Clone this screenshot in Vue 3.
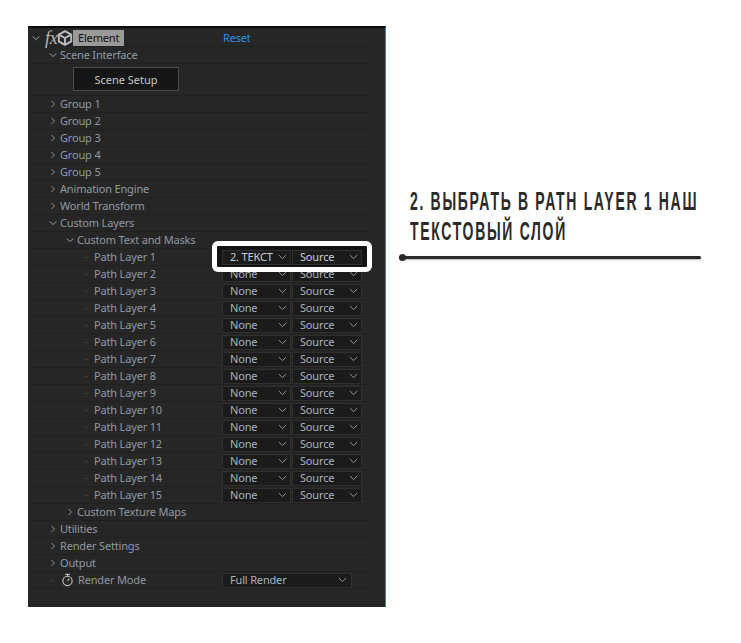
<script setup>
const groups = ['Group 1', 'Group 2', 'Group 3', 'Group 4', 'Group 5', 'Animation Engine', 'World Transform']
const paths = Array.from({ length: 15 }, (_, i) => ({
  name: `Path Layer ${i + 1}`,
  value: i === 0 ? '2. ТЕКСТ' : 'None',
}))
const tail = ['Utilities', 'Render Settings', 'Output']
</script>

<template>
  <div class="page">
    <section class="panel">
      <div class="row fx-row">
        <svg class="chev open lvl0" viewBox="0 0 8 8"><path d="M.5 2.5 4 5.5 7.5 2.5" /></svg>
        <span class="fx">fx</span>
        <svg class="cube" viewBox="0 0 16 16">
          <path d="M8 1.2 14.2 4.6V11.4L8 14.8 1.8 11.4V4.6Z" />
          <path d="M1.8 4.6 8 8 14.2 4.6M8 8V14.8" />
        </svg>
        <span class="tag">Element</span>
        <a class="reset">Reset</a>
      </div>
      <div class="row l1">
        <svg class="chev open" viewBox="0 0 8 8"><path d="M.5 2.5 4 5.5 7.5 2.5" /></svg>
        <span>Scene Interface</span>
      </div>
      <div class="row button-row"><button class="setup">Scene Setup</button></div>
      <div v-for="g in groups" :key="g" class="row l1">
        <svg class="chev" viewBox="0 0 8 8"><path d="M2.5 1 5.5 4 2.5 7" /></svg>
        <span>{{ g }}</span>
      </div>
      <div class="row l1">
        <svg class="chev open" viewBox="0 0 8 8"><path d="M.5 2.5 4 5.5 7.5 2.5" /></svg>
        <span>Custom Layers</span>
      </div>
      <div class="row l2">
        <svg class="chev open" viewBox="0 0 8 8"><path d="M.5 2.5 4 5.5 7.5 2.5" /></svg>
        <span>Custom Text and Masks</span>
      </div>
      <div v-for="(p, i) in paths" :key="p.name" class="row l3" :class="{ lifted: i === 0 }">
        <i class="tick"></i>
        <span class="name">{{ p.name }}</span>
        <div class="controls">
          <div v-if="i === 0" class="highlight"></div>
          <div class="select first">
            <span>{{ p.value }}</span>
            <svg viewBox="0 0 9 6"><path d="M.8 1 4.5 4.6 8.2 1" /></svg>
          </div>
          <div class="select second">
            <span>Source</span>
            <svg viewBox="0 0 9 6"><path d="M.8 1 4.5 4.6 8.2 1" /></svg>
          </div>
        </div>
      </div>
      <div class="row l2">
        <svg class="chev" viewBox="0 0 8 8"><path d="M2.5 1 5.5 4 2.5 7" /></svg>
        <span>Custom Texture Maps</span>
      </div>
      <div v-for="t in tail" :key="t" class="row l1">
        <svg class="chev" viewBox="0 0 8 8"><path d="M2.5 1 5.5 4 2.5 7" /></svg>
        <span>{{ t }}</span>
      </div>
      <div class="row mode">
        <i class="tick"></i>
        <svg class="watch" viewBox="0 0 14 14">
          <circle cx="7" cy="8" r="5" />
          <path d="M4.6 1H9.4M7 1V3M7 8 9 5.5" />
        </svg>
        <span class="name">Render Mode</span>
        <div class="controls">
          <div class="select wide">
            <span>Full Render</span>
            <svg viewBox="0 0 9 6"><path d="M.8 1 4.5 4.6 8.2 1" /></svg>
          </div>
        </div>
      </div>
    </section>

    <aside class="note">
      <h2>
        <span>2. ВЫБРАТЬ В PATH LAYER 1 НАШ</span>
        <span>ТЕКСТОВЫЙ СЛОЙ</span>
      </h2>
      <div class="rule"></div>
    </aside>
  </div>
</template>

<style scoped>
.page {
  width: 741px;
  height: 643px;
  background: #fff;
  display: flex;
  align-items: flex-start;
  padding: 26px 0 0 28px;
  box-sizing: border-box;
  overflow: hidden;
}
.panel {
  width: 358px;
  height: 581px;
  box-sizing: border-box;
  padding: 4px 17px 0 0;
  flex: none;
  background: #262626;
  border-top: 2px solid #0c0c0c;
  border-right: 1px solid #3f7fc0;
  font: 11px/16px "Noto Sans", sans-serif;
  letter-spacing: -0.17px;
  color: #8f99a3;
}
.panel > .fx-row { margin-top: -2px; }
.row {
  height: 17px;
  box-sizing: border-box;
  border-bottom: 1px solid #202020;
  display: flex;
  align-items: center;
  position: relative;
  white-space: nowrap;
}
.chev {
  width: 8px;
  height: 8px;
  flex: none;
  margin-right: 4px;
}
.chev path, .select path {
  fill: none;
  stroke: #8f959b;
  stroke-width: 1;
}
.fx-row { padding-left: 4px; }
.fx-row .lvl0 { margin-right: 5px; }
.fx {
  font: italic 18px/16px "Liberation Serif", serif;
  color: #b4b8bc;
  width: 12px;
}
.cube {
  width: 16px;
  height: 16px;
  flex: none;
}
.cube path {
  fill: none;
  stroke: #b9bcc0;
  stroke-width: 1.9;
}
.tag {
  width: 51px;
  height: 16px;
  padding-left: 5px;
  box-sizing: border-box;
  background: #9a9a9a;
  color: #111;
  line-height: 16px;
}
.reset {
  margin-left: 99px;
  color: #2f8fe8;
}
.l1 { padding-left: 21px; }
.l1 .chev { margin-right: 3px; }
.l2 { padding-left: 38px; }
.l2 .chev { margin-right: 3px; }
.button-row {
  height: 32px;
  padding: 0 0 1px 45px;
}
.setup {
  width: 106px;
  height: 24px;
  padding: 0;
  background: #161616;
  border: 1px solid #4a4a4a;
  color: #c4c8cc;
  font: 11px "Noto Sans", sans-serif;
}
.l3 { padding-left: 66px; }
.tick {
  position: absolute;
  left: 57px;
  top: 8px;
  width: 3px;
  height: 1px;
  background: #3c3c3c;
}
.l3 .name { width: 128px; flex: none; }
.mode { padding-left: 33px; }
.mode .tick { left: 23px; }
.watch {
  width: 13px;
  height: 14px;
  flex: none;
  margin-right: 4px;
}
.watch circle, .watch path {
  fill: none;
  stroke: #c2c4c6;
  stroke-width: 1.2;
}
.mode .name { width: 144px; flex: none; }
.controls {
  display: flex;
  gap: 1px;
  position: relative;
}
.select {
  height: 15px;
  box-sizing: border-box;
  background: #1b1b1b;
  border: 1px solid #2f2f2f;
  color: #a7b3be;
  display: flex;
  align-items: center;
  justify-content: space-between;
  padding: 0 3px 1px 7px;
  line-height: 13px;
  position: relative;
}
.select svg { width: 9px; height: 6px; flex: none; }
.first { width: 69px; }
.second { width: 70px; }
.wide { width: 130px; padding-right: 4px; }
.lifted { z-index: 2; }
.lifted .select { background: #1b1b1b; color: #c8ced4; }
.highlight {
  position: absolute;
  left: -10px;
  top: -9px;
  width: 160px;
  height: 31px;
  box-sizing: border-box;
  border: 5px solid #fff;
  border-radius: 6px;
  background: #131313;
}
.note {
  margin-left: 24px;
  width: 318px;
  padding-top: 160px;
  flex: none;
}
h2 {
  margin: 0;
  color: #2a2a2a;
  font: 700 25px/30px "Liberation Sans", sans-serif;
  letter-spacing: 3px;
  white-space: nowrap;
}
h2 span {
  display: block;
  transform: scaleX(0.56);
  transform-origin: left center;
}
.rule {
  height: 3px;
  margin: 10px 0 0 -11px;
  width: 302px;
  background: #2a2a2a;
  border-radius: 2px;
  position: relative;
  box-shadow: 0 1px 2px rgba(0,0,0,.3);
}
.rule::before {
  content: "";
  position: absolute;
  left: 0;
  top: -2px;
  width: 7px;
  height: 7px;
  border-radius: 50%;
  background: #2a2a2a;
}
</style>
